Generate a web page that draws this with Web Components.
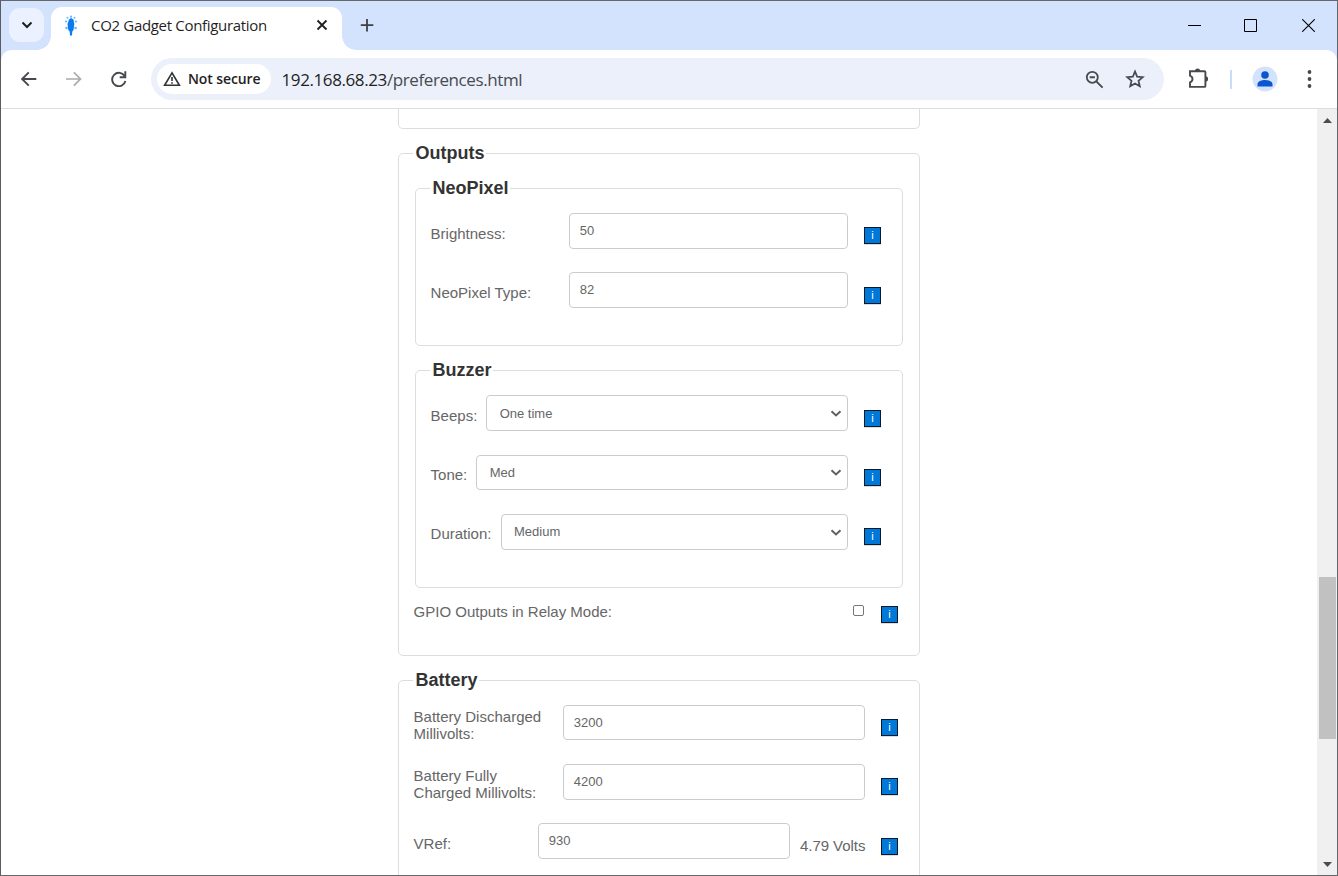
<!DOCTYPE html>
<html lang="en">
<head>
<meta charset="utf-8">
<title>CO2 Gadget Configuration</title>
<style>
html,body{margin:0;height:100%;overflow:hidden;background:#fff;font-family:"Liberation Sans",Arial,sans-serif}
</style>
</head>
<body>
<browser-window>
  <tab-strip slot="tabs" label="CO2 Gadget Configuration"></tab-strip>
  <tool-bar slot="toolbar" host="192.168.68.23" path="/preferences.html"></tool-bar>
  <pref-group class="tail" style="--h:20px"></pref-group>
  <pref-group legend="Outputs" style="--h:503px">
    <pref-group nested legend="NeoPixel" style="--h:158px">
      <pref-row label="Brightness:" style="--label:139px;--step:59px;--info:14px"><text-field value="50"></text-field></pref-row>
      <pref-row label="NeoPixel Type:" style="--label:139px;--info:15px"><text-field value="82"></text-field></pref-row>
    </pref-group>
    <pref-group nested legend="Buzzer" style="--h:218px">
      <pref-row label="Beeps:" style="--label:56px;--step:60px;--info:15px"><select-field value="One time" style="--text:10px;--nudge:.7px"></select-field></pref-row>
      <pref-row label="Tone:" style="--label:46px;--step:59px;--info:14px;--base:11px"><select-field value="Med" style="--fh:35px;--arrow:13px;--nudge:.7px"></select-field></pref-row>
      <pref-row label="Duration:" style="--label:71px;--info:14px;--base:11px"><select-field value="Medium"></select-field></pref-row>
    </pref-group>
    <pref-row class="relay" label="GPIO Outputs in Relay Mode:" style="--label:440px;--base:3px;--info:6px"><check-box></check-box></pref-row>
  </pref-group>
  <pref-group legend="Battery" style="--h:260px">
    <pref-row label="Battery Discharged Millivolts:" style="--label:150px;--step:59px;--base:3px;--info:14px"><text-field value="3200" style="--fh:35px"></text-field></pref-row>
    <pref-row label="Battery Fully Charged Millivolts:" style="--label:150px;--step:59px;--base:3px;--info:14px"><text-field value="4200"></text-field></pref-row>
    <pref-row label="VRef:" unit="4.79 Volts" style="--label:125px;--info:15px"><text-field value="930"></text-field></pref-row>
  </pref-group>
</browser-window>
<script>
const define = (name, render) => customElements.define(name, class extends HTMLElement {
  connectedCallback() {
    if (this.shadowRoot) return;
    this.attachShadow({mode: "open"}).innerHTML = render(this);
  }
});
const attr = (el, n) => el.getAttribute(n) || "";

define("browser-window", () => `
<style>
:host{display:flex;flex-direction:column;box-sizing:border-box;width:100vw;height:100vh;border:1px solid #66676b;
  border-left-color:#5c5c60;background:#fff;overflow:hidden}
.view{flex:1;min-height:0;display:flex}
.page{flex:1;overflow:hidden;display:flex;flex-direction:column;align-items:flex-start;padding-left:397px}
</style>
<slot name="tabs"></slot><slot name="toolbar"></slot>
<div class="view"><div class="page"><slot></slot></div><scroll-bar></scroll-bar></div>`);

define("tab-strip", el => `
<style>
:host{display:flex;flex:none;height:49px;background:#d3e2fd;font-family:"Open Sans","Noto Sans",sans-serif;color:#1f1f1f}
svg{display:block;flex:none}
.search{width:35px;height:34px;margin:7px 0 0 8px;border-radius:11px;background:#ebf1fe;display:flex;align-items:center;justify-content:center}
.tab{position:relative;box-sizing:border-box;width:290.500px;height:43px;margin:6px 0 0 7px;background:#fff;border-radius:11px 11px 0 0;display:flex;align-items:center;padding:0 14px 6px 13px}
.tab::before,.tab::after{content:"";position:absolute;bottom:0;width:14px;height:14px}
.tab::before{left:-14px;background:radial-gradient(circle at 0 0,transparent 13.5px,#fff 14px)}
.tab::after{right:-14px;background:radial-gradient(circle at 100% 0,transparent 13.5px,#fff 14px)}
.title{flex:1;margin:-2px 0 0 13px;font-size:15px;line-height:20px;white-space:nowrap;letter-spacing:-.32px}
.plus{margin:17px 0 0 18.500px}
.win{margin:18px 22px 0 auto;display:flex;gap:43px}
</style>
<div class="search"><svg width="12" height="8" viewBox="0 0 12 8"><path d="M1.500 1.500 6 6l4.500-4.500" fill="none" stroke="#1f1f1f" stroke-width="2"/></svg></div>
<div class="tab">
<svg width="14" height="22" viewBox="0 0 14 22"><g fill="#68b7f7"><circle cx="7" cy="1.700" r="1.100"/><circle cx="3.500" cy="2.800" r="1"/><circle cx="10.500" cy="2.800" r="1"/><circle cx="2" cy="6.500" r="1.100"/><circle cx="12" cy="6.500" r="1.100"/><circle cx="2.500" cy="13" r="1.300"/><circle cx="11.500" cy="13" r="1.300"/></g><path d="M5 4.500 7 3l2.500 1.500.8 4.500-.8 6-1.200 1.500L8 20.500H6l-.3-4L4.300 15 3.500 9z" fill="#0b7cf0"/></svg>
<span class="title">${attr(el, "label")}</span>
<svg width="12" height="12" viewBox="0 0 12 12" style="margin-top:-1px"><path d="m1.500 1.500 9 9m0-9-9 9" stroke="#1f1f1f" stroke-width="1.800"/></svg>
</div>
<svg class="plus" width="14" height="14" viewBox="0 0 14 14"><path d="M7 1v12.500M.8 7.200h12.500" stroke="#3c3f43" stroke-width="1.800"/></svg>
<div class="win">
<svg width="13" height="13" viewBox="0 0 13 13"><path d="M0 6.500h13" stroke="#000"/></svg>
<svg width="13" height="13" viewBox="0 0 13 13"><path d="M.5.5h12v12H.5z" fill="none" stroke="#000"/></svg>
<svg style="margin-left:2px" width="13" height="13" viewBox="0 0 13 13"><path d="m.2.2 12.600 12.600m0-12.600L.2 12.800" stroke="#000" stroke-width="1.100"/></svg>
</div>`);

define("tool-bar", el => `
<style>
:host{display:flex;flex:none;box-sizing:border-box;height:59px;align-items:center;background:#d3e2fd;font-family:"Open Sans","Noto Sans",sans-serif}
.bar{flex:1;box-sizing:border-box;height:59px;display:flex;align-items:center;background:#fff;border-radius:11px 11px 0 0;border-bottom:1px solid #dcdde0;padding-left:20px}
svg{display:block;flex:none}
.omni{box-sizing:border-box;width:1013px;height:42px;margin-left:24px;border-radius:21px;background:#ebf0fa;display:flex;align-items:center;padding:0 19px 0 6px}
.chip{box-sizing:border-box;width:114px;height:30px;border-radius:15px;background:#fff;display:flex;align-items:center;padding-left:6px;color:#1f1f1f}
.chip span{margin-left:7px;font:600 14px/20px "Open Sans";letter-spacing:-.1px;white-space:nowrap}
.url{flex:1;margin:1px 0 0 10.500px;font-size:17px;line-height:24px;letter-spacing:-.4px;color:#1f1f1f;white-space:nowrap}
.url span{color:#474a4f}
.sep{width:2px;height:19px;margin-left:21px;background:#c9dcfb}
</style>
<div class="bar">
<svg width="16" height="16" viewBox="0 0 16 16"><path d="M15.300 8H1.500M7.800 1.300 1.100 8l6.700 6.700" fill="none" stroke="#46494d" stroke-width="1.900"/></svg>
<svg style="margin-left:29px" width="16" height="16" viewBox="0 0 16 16"><path d="M0 8h14M7.800 1.300 14.500 8l-6.700 6.700" fill="none" stroke="#aaabad" stroke-width="1.700"/></svg>
<svg style="margin-left:29px" width="16" height="16" viewBox="0 0 16 16"><path d="M13.700 5.200A6.700 6.700 0 1 0 14.400 10" fill="none" stroke="#46494d" stroke-width="1.900"/><path d="M14.300.3v5.900H8.700" fill="none" stroke="#46494d" stroke-width="1.900"/></svg>
<div class="omni">
<div class="chip"><svg width="18" height="16" viewBox="0 0 18 16"><path d="M9 1.800 1.600 14.300h14.800z" fill="none" stroke="#303236" stroke-width="1.600"/><path d="M9 6v4m0 1.200v1.600" stroke="#303236" stroke-width="1.600"/></svg><span>Not secure</span></div>
<div class="url">${attr(el, "host")}<span>${attr(el, "path")}</span></div>
<svg width="19" height="19" viewBox="0 0 19 19"><circle cx="7.300" cy="7.300" r="5.500" fill="none" stroke="#46494d" stroke-width="1.800"/><path d="m11.300 11.300 6.300 6.300M4.700 7.300h5.200" stroke="#46494d" stroke-width="1.900"/></svg>
<svg style="margin-left:21px" width="20" height="20" viewBox="0 0 20 20"><path d="m10 2.400 2.100 5.200 5.700.5-4.300 3.700 1.300 5.500L10 14.400l-4.800 2.900 1.300-5.500-4.300-3.700 5.700-.5z" fill="none" stroke="#46494d" stroke-width="1.700"/></svg>
</div>
<svg style="margin-left:24px;margin-top:-2px" width="21" height="22" viewBox="0 0 21 22"><path d="M2 4.300h14.500q.9 0 .9.900V19q0 .9-.9.900H2v-4.400q2.500-1 2.500-3.400T2 8.700z" fill="none" stroke="#46494d" stroke-width="1.900"/><path d="M7 4a2.600 2.600 0 0 1 5.200 0zM17.500 9.300a2.600 2.600 0 0 1 0 5.200z" fill="#46494d"/></svg>
<div class="sep"></div>
<svg style="margin-left:19.500px;margin-top:-1px" width="26" height="26" viewBox="0 0 26 26"><circle cx="13" cy="13" r="12.500" fill="#d3e3fd"/><circle cx="13" cy="9" r="3.800" fill="#0b57d0"/><path d="M5.500 20.500v-2.300c0-3 4.500-4.200 7.500-4.200s7.500 1.200 7.500 4.200v2.300z" fill="#0b57d0"/></svg>
<svg style="margin-left:29.500px" width="5" height="18" viewBox="0 0 5 18"><g fill="#46494d"><circle cx="2.500" cy="2" r="1.900"/><circle cx="2.500" cy="9" r="1.900"/><circle cx="2.500" cy="16" r="1.900"/></g></svg>
</div>`);

define("scroll-bar", () => `
<style>
:host{flex:none;width:20px;background:#f0f0f0;display:flex;flex-direction:column;align-items:center}
svg{display:block;flex:none}
.up{margin-top:9px}.down{margin:auto 0 8px}
.thumb{width:17px;height:162px;margin-top:454px;background:#c1c1c1}
</style>
<svg class="up" width="9" height="5" viewBox="0 0 9 5"><path d="M0 5 4.500 0 9 5z" fill="#4d4d4d"/></svg>
<div class="thumb"></div>
<svg class="down" width="9" height="5" viewBox="0 0 9 5"><path d="M0 0 4.500 5 9 0z" fill="#4d4d4d"/></svg>`);

define("pref-group", el => `
<style>
:host{display:flex;flex-direction:column;flex:none;box-sizing:border-box;width:522px;height:var(--h);margin-bottom:24px;
  border:1px solid #ddd;border-radius:5px;padding-left:14px}
:host(.tail){border-top:0;border-radius:0 0 5px 5px}
:host([nested]){width:488px;margin-left:2px}
.legend{align-self:flex-start;margin:-11px 0 15px;padding:0 1.500px 0 2.500px;height:20px;background:#fff;color:#333;
  font:bold 18px/20px "Liberation Sans",Arial,sans-serif}
:host([legend="Outputs"]) .legend{margin-bottom:25px}
::slotted(.relay){margin-top:-12px}
</style>
${attr(el, "legend") ? `<div class="legend">${attr(el, "legend")}</div>` : ""}<slot></slot>`);

define("pref-row", el => `
<style>
:host{display:flex;flex:none;align-items:flex-start;height:var(--step,36px);padding-right:21px;
  font:15px/17px "Liberation Sans",Arial,sans-serif;color:#666}
.label{flex:none;box-sizing:border-box;width:var(--label);padding:var(--base,12px) 0 0 .6px}
.label span{display:block;max-width:var(--wrap,none);white-space:var(--ws,nowrap)}
.unit{width:65px;margin:14px 0 0 10px;white-space:nowrap;letter-spacing:-.05px}
.info{flex:none;box-sizing:border-box;width:17px;height:17px;margin:var(--info) 0 0 16px;border:1px solid #0b1a2a;
  background:#0078d7;color:#fff;text-align:center;font:11px/15px "Liberation Sans",Arial,sans-serif;box-shadow:0 1px 0 #ddd}
</style>
<div class="label"><span${attr(el, "label").startsWith("Battery") ? ' style="--wrap:135px;--ws:normal"' : ""}>${attr(el, "label")}</span></div>
<slot></slot>${attr(el, "unit") ? `<div class="unit">${attr(el, "unit")}</div>` : ""}<div class="info">i</div>`);

const field = `display:flex;flex:1;box-sizing:border-box;height:var(--fh,36px);border:1px solid #ccc;border-radius:4px;
  font:13px/15px "Liberation Sans",Arial,sans-serif;color:#666;background:#fff;white-space:nowrap`;
define("text-field", el => `<style>:host{${field};padding:9px 9px 0 9.700px}</style><span>${attr(el, "value")}</span>`);
define("select-field", el => `
<style>:host{${field};padding:var(--text,9px) 5.500px 0 calc(12px + var(--nudge,0px));justify-content:space-between}
svg{display:block;margin-top:calc(var(--arrow,14px) - var(--text,9px))}</style>
<span>${attr(el, "value")}</span><svg width="12" height="8" viewBox="0 0 12 8"><path d="M1.500 1.300 6 5.500l4.500-4.200" fill="none" stroke="#606060" stroke-width="2"/></svg>`);
define("check-box", () => `<style>:host{display:block;box-sizing:border-box;width:11px;height:11px;margin:5px 1px 0 0;border:1px solid #767676;border-radius:2px;background:#fff}</style>`);
</script>
</body>
</html>
